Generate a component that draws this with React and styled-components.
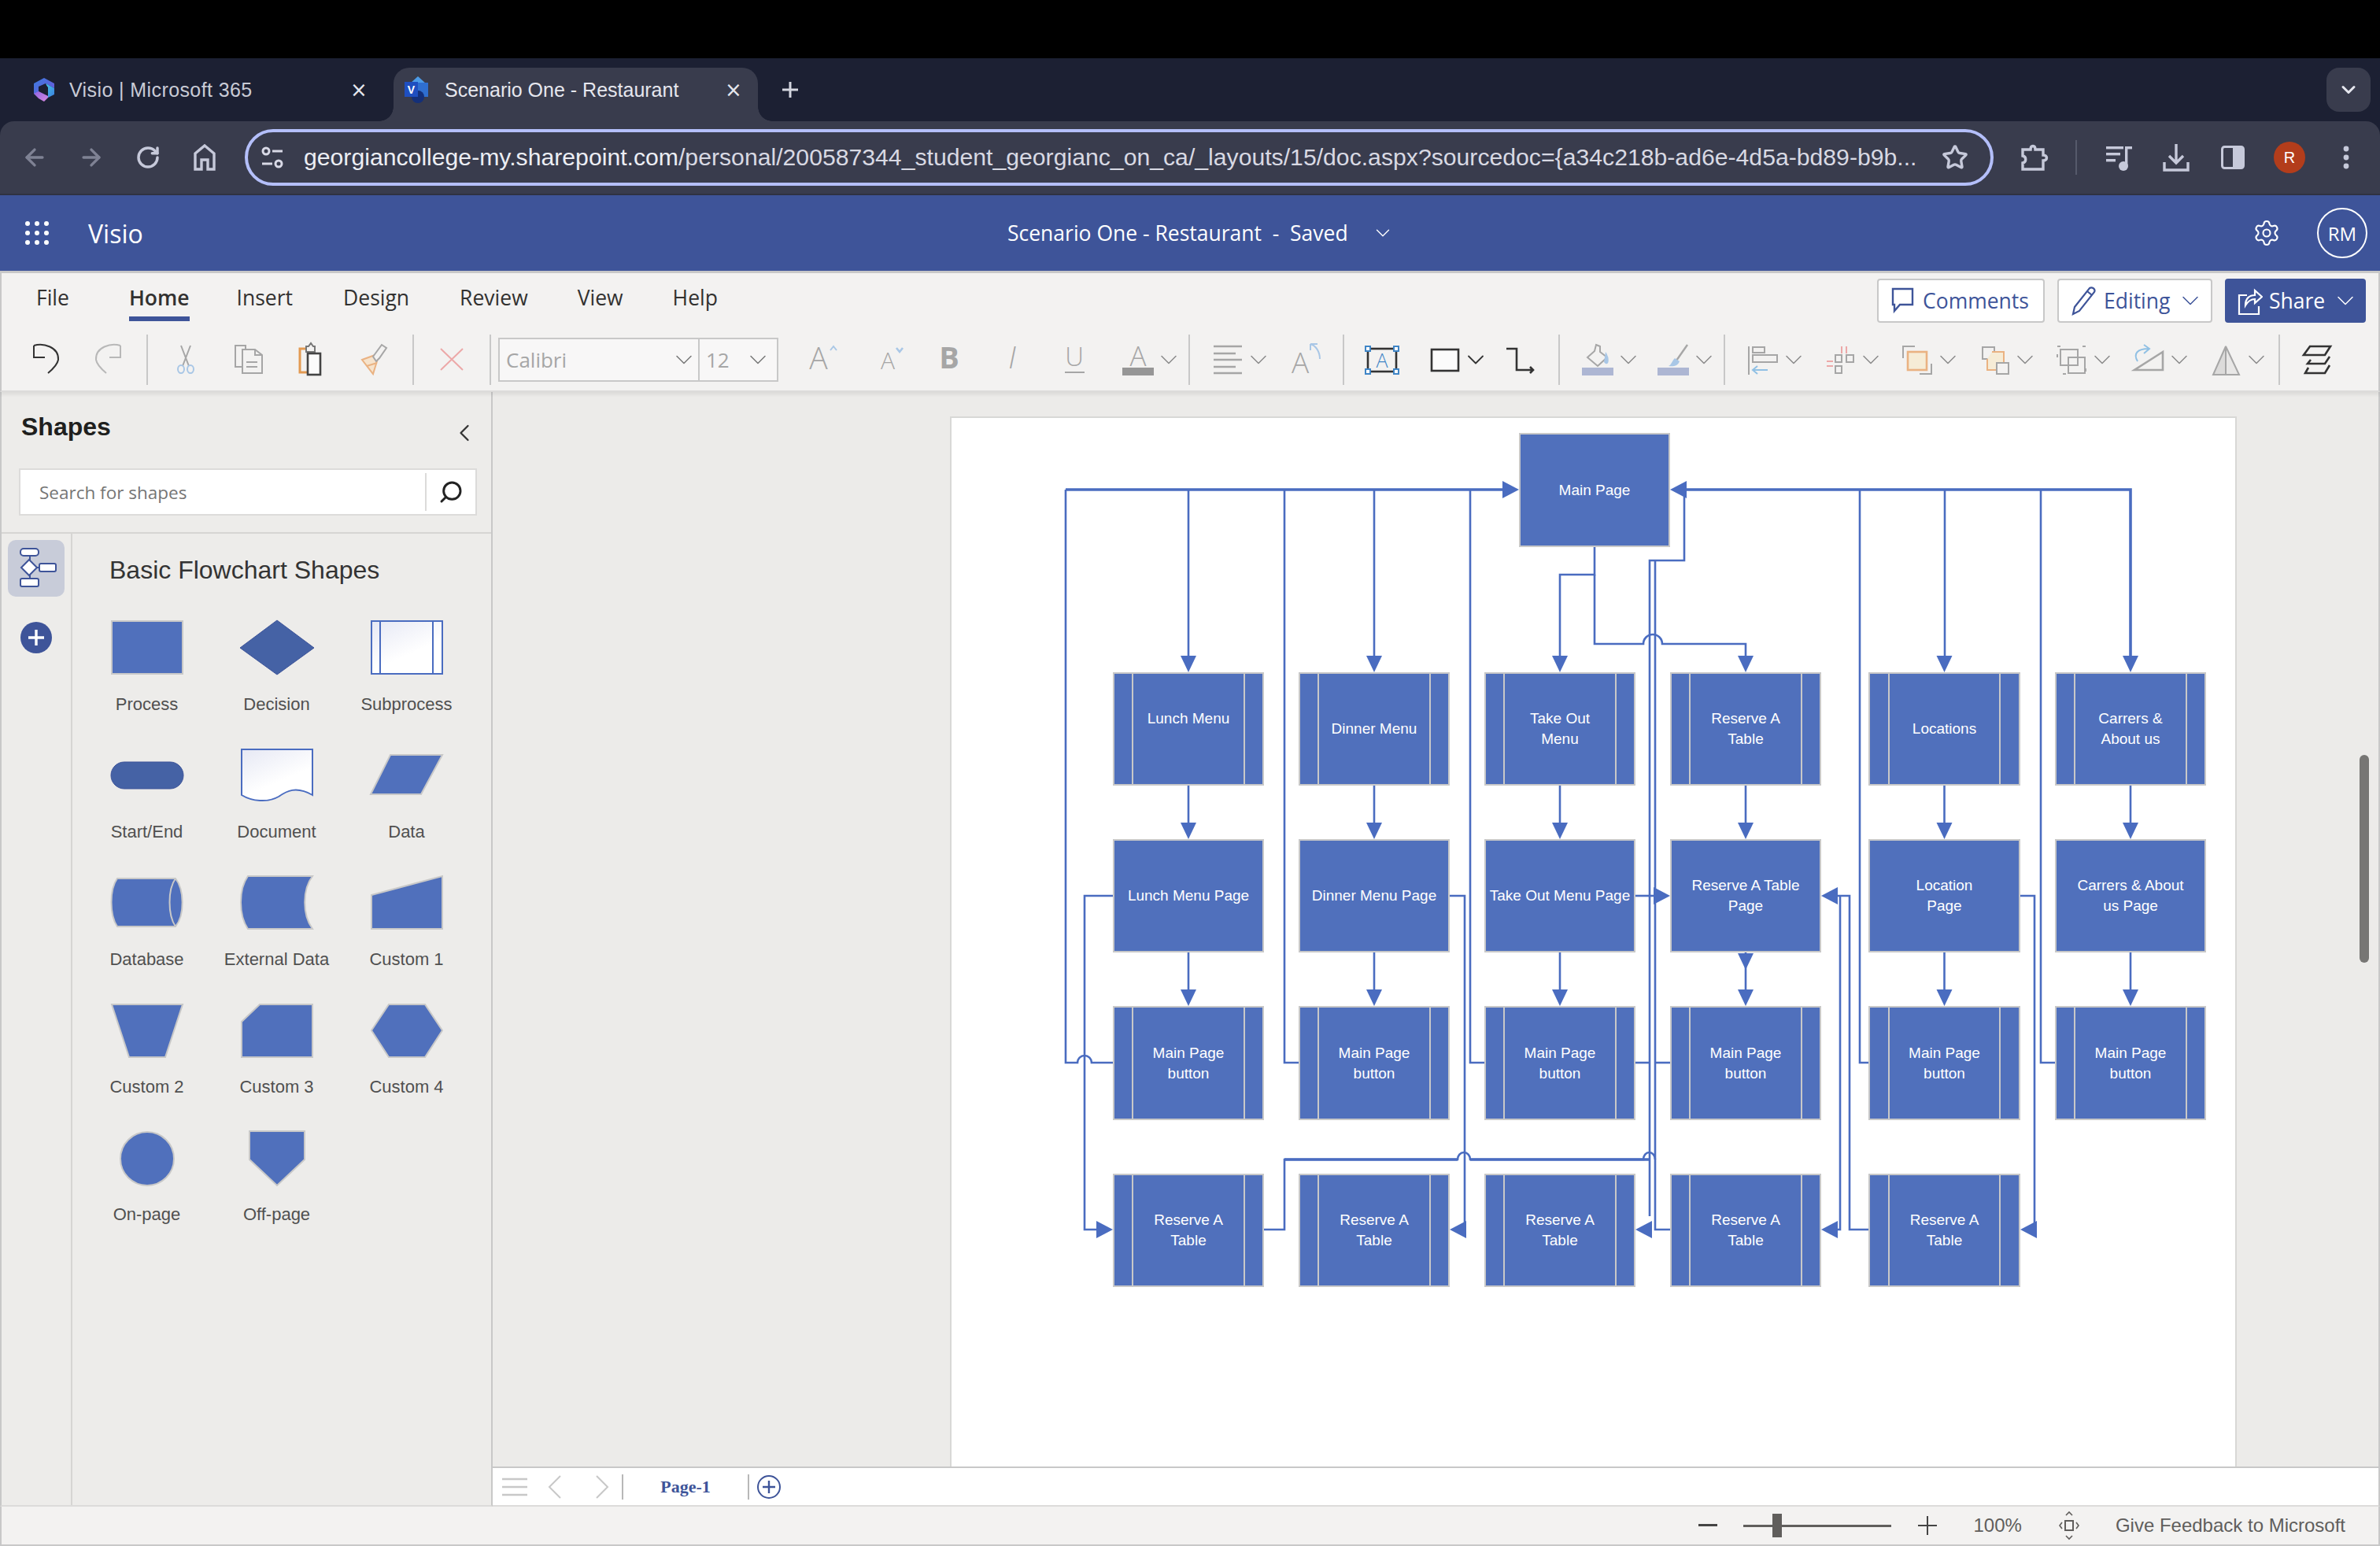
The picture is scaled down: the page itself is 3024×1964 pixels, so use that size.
import React from "react";
import styled, { createGlobalStyle } from "styled-components";
import { ChevronDown, ChevronLeft, ArrowLeft, ArrowRight, RotateCw, Star, Settings, Search } from "lucide-react";

const BLUE = "#3e5499";
const NODE_BLUE = "#5070bc";
const LINE_BLUE = "#4a6cc0";
const STRIP = "#1c2033";
const BAR = "#393c4d";
const SHEET_X = 1209;
const SHEET_Y = 531;

const GlobalStyle = createGlobalStyle`
  html, body { margin: 0; padding: 0; background: #000; }
  * { box-sizing: border-box; }
`;

const Page = styled.div`
  width: 3024px;
  height: 1964px;
  display: flex;
  flex-direction: column;
  overflow: hidden;
  background: #000;
  font-family: "Liberation Sans", Arial, sans-serif;
`;

/*---------------- browser chrome ----------------*/
const TopBlack = styled.div`
  height: 74px;
  background: #000;
`;

const TabStrip = styled.div`
  height: 80px;
  background: ${STRIP};
  display: flex;
  align-items: flex-end;
  padding-left: 12px;
  padding-right: 12px;
`;

const BrowserTab = styled.div`
  width: ${(p) => p.$w}px;
  height: 68px;
  display: flex;
  align-items: center;
  padding-bottom: 12px;
  padding-left: ${(p) => p.$pl}px;
  border-radius: 20px 20px 0 0;
  color: ${(p) => (p.$active ? "#e6e7ee" : "#c9cbd6")};
  background: ${(p) => (p.$active ? BAR : "transparent")};
  font-size: 25px;
  letter-spacing: ${(p) => p.$ls || 0}px;
  position: relative;
  flex-shrink: 0;
  ${(p) =>
    p.$active &&
    `&::before, &::after { content: ""; position: absolute; bottom: 0; width: 18px; height: 18px; }
     &::before { left: -18px; background: radial-gradient(circle at 0 0, ${STRIP} 17.5px, ${BAR} 18px); }
     &::after { right: -18px; background: radial-gradient(circle at 100% 0, ${STRIP} 17.5px, ${BAR} 18px); }`}
`;

const TabTitle = styled.span`
  margin-left: 17px;
  flex: 1;
  white-space: nowrap;
`;

const TabClose = styled.span`
  width: 24px;
  color: #e6e7ee;
  font-size: 26px;
  font-family: "DejaVu Sans", sans-serif;
  text-align: center;
  margin-right: ${(p) => p.$mr}px;
`;

const NewTab = styled.div`
  width: 56px;
  height: 68px;
  padding-bottom: 12px;
  margin-left: 13px;
  display: flex;
  align-items: center;
  justify-content: center;
  color: #d4d6e0;
`;

const TabMenu = styled.div`
  margin-left: auto;
  margin-bottom: 12px;
  width: 56px;
  height: 56px;
  border-radius: 16px;
  background: ${BAR};
  display: flex;
  align-items: center;
  justify-content: center;
  color: #e6e7ee;
`;

const ChromeBack = styled.div`
  background: ${STRIP};
`;

const ChromeBar = styled.div`
  height: 94px;
  background: ${BAR};
  border-bottom: 2px solid #2f3241;
  border-radius: 18px 18px 0 0;
  display: flex;
  align-items: center;
`;

const NavIcon = styled.div`
  width: ${(p) => p.$w || 72}px;
  height: 60px;
  display: flex;
  align-items: center;
  justify-content: center;
  color: ${(p) => p.$color || "#c6c9da"};
  flex-shrink: 0;
`;

const UrlBar = styled.div`
  width: 2222px;
  height: 72px;
  margin-left: 23px;
  border: 4px solid #b4bffa;
  border-radius: 36px;
  display: flex;
  align-items: center;
  padding-left: 17px;
  padding-right: 9px;
  flex-shrink: 0;
`;

const UrlText = styled.div`
  margin-left: 26px;
  flex: 1;
  font-size: 30.2px;
  color: #d8d9e3;
  white-space: nowrap;
  b { font-weight: 400; color: #eceef4; }
`;

const ChromeDivider = styled.div`
  width: 2px;
  height: 44px;
  margin-right: 18px;
  background: #565a6b;
  flex-shrink: 0;
`;

const Avatar = styled.div`
  width: 40px;
  height: 40px;
  border-radius: 50%;
  background: #b33d1b;
  color: #fff;
  font-size: 20px;
  display: flex;
  align-items: center;
  justify-content: center;
`;

/*---------------- office header ----------------*/
const AppHeader = styled.div`
  height: 96px;
  background: ${BLUE};
  color: #fff;
  font-family: "Open Sans", sans-serif;
  display: grid;
  grid-template-columns: 1280px 1fr auto;
  align-items: center;
`;

const HeaderLeft = styled.div`
  display: flex;
  align-items: center;
  padding-left: 32px;
`;

const Waffle = styled.div`
  display: grid;
  grid-template-columns: repeat(3, 6px);
  gap: 6px;
  span { width: 6px; height: 6px; border-radius: 50%; background: #fff; }
`;

const AppName = styled.div`
  font-size: 32px;
  margin-left: 50px;
`;

const DocTitle = styled.div`
  display: flex;
  align-items: center;
  font-size: 26.5px;
  white-space: pre;
  svg { margin-left: 29px; }
`;

const HeaderRight = styled.div`
  display: flex;
  align-items: center;
  padding-right: 16px;
`;

const UserBadge = styled.div`
  width: 64px;
  height: 64px;
  margin-left: 46px;
  border-radius: 50%;
  border: 2px solid #fff;
  font-size: 24px;
  display: flex;
  align-items: center;
  justify-content: center;
`;

/*---------------- ribbon ----------------*/
const Ribbon = styled.div`
  height: 154px;
  background: #f3f2f1;
  border: 2px solid #c8c8c8;
  border-width: 3px 2px 2px 2px;
  border-bottom-color: #dcdbda;
  font-family: "Open Sans", sans-serif;
  box-shadow: 0 3px 5px rgba(0, 0, 0, 0.08);
  position: relative;
  z-index: 2;
`;

const RibbonTabs = styled.div`
  height: 76px;
  display: flex;
  align-items: flex-start;
  padding: 7px 16px 0 44px;
`;

const RibbonTab = styled.div`
  height: 54px;
  margin-right: ${(p) => p.$mr}px;
  font-size: 26.5px;
  line-height: 48px;
  color: #323130;
  font-weight: ${(p) => (p.$active ? 600 : 400)};
  border-bottom: 6px solid ${(p) => (p.$active ? BLUE : "transparent")};
`;

const ActionButton = styled.div`
  height: 56px;
  width: ${(p) => p.$w}px;
  margin-left: ${(p) => (p.$first ? "auto" : "16px")};
  padding-left: ${(p) => p.$pl}px;
  border: 2px solid ${(p) => (p.$primary ? BLUE : "#c8c8c8")};
  border-radius: 4px;
  background: ${(p) => (p.$primary ? BLUE : "#fff")};
  color: ${(p) => (p.$primary ? "#fff" : BLUE)};
  font-size: 26.5px;
  font-weight: 500;
  display: flex;
  align-items: center;
  gap: 8px;
  svg { flex-shrink: 0; }
`;

const ToolRow = styled.div`
  height: 68px;
  display: flex;
  align-items: center;
  padding-left: 14px;
`;

const RibbonSep = styled.div`
  width: 2px;
  height: 64px;
  background: #c8c8c8;
  margin-left: ${(p) => p.$ml || 0}px;
  margin-right: ${(p) => p.$mr || 0}px;
  flex-shrink: 0;
`;

const Tool = styled.div`
  width: ${(p) => p.$w}px;
  margin-left: ${(p) => p.$ml || 0}px;
  height: 56px;
  display: flex;
  align-items: center;
  justify-content: center;
  flex-shrink: 0;
`;

const ChevBox = styled.div`
  width: 24px;
  height: 56px;
  display: flex;
  align-items: center;
  justify-content: center;
  color: #8a8a8a;
  flex-shrink: 0;
  svg { flex-shrink: 0; }
`;

const ToolGroup = styled.div`
  display: flex;
  align-items: center;
  gap: ${(p) => p.$gap || 0}px;
  margin-left: ${(p) => p.$ml || 0}px;
`;

const DropTool = styled.div`
  display: flex;
  align-items: center;
  margin-left: ${(p) => p.$ml || 0}px;
`;

const FontCombo = styled.div`
  width: 356px;
  height: 56px;
  border: 2px solid #c8c8c8;
  background: #f8f7f7;
  display: flex;
  color: #a6a6a6;
  font-size: 26px;
  font-family: "Open Sans", sans-serif;
  flex-shrink: 0;
`;

const ComboField = styled.div`
  width: ${(p) => p.$w}px;
  display: flex;
  align-items: center;
  justify-content: space-between;
  padding: 0 0 0 8px;
  border-right: ${(p) => (p.$divided ? "2px solid #c8c8c8" : "none")};
`;

/*---------------- main ----------------*/
const Main = styled.div`
  flex: 1;
  display: flex;
  min-height: 0;
`;

const ShapesPanel = styled.div`
  width: 626px;
  background: #edecea;
  border-left: 2px solid #c8c8c8;
  border-right: 2px solid #c8c8c8;
  border-bottom: 2px solid #dcdbda;
  display: flex;
  flex-direction: column;
  flex-shrink: 0;
`;

const PanelHead = styled.div`
  height: 180px;
  border-bottom: 2px solid #d6d5d3;
  padding: 26px 16px 0 22px;
`;

const PanelTitleRow = styled.div`
  display: flex;
  justify-content: space-between;
  align-items: center;
  height: 36px;
  padding-left: 3px;
  color: #201f1e;
  font-size: 32px;
  font-weight: 700;
  svg { margin-top: 16px; margin-right: 0; color: #333; }
`;

const SearchBox = styled.div`
  margin-top: 35px;
  width: 582px;
  height: 60px;
  background: #fff;
  border: 2px solid #dcdbda;
  display: flex;
  align-items: center;
  font-family: "Open Sans", sans-serif;
  font-size: 22.5px;
  color: #757575;
  padding-left: 24px;
`;

const SearchDivider = styled.div`
  width: 2px;
  height: 48px;
  margin-left: auto;
  background: #dcdbda;
`;

const SearchIconBox = styled.div`
  width: 62px;
  display: flex;
  justify-content: center;
  color: #222;
`;

const PanelBody = styled.div`
  flex: 1;
  display: flex;
  min-height: 0;
`;

const StencilRail = styled.div`
  width: 90px;
  border-right: 2px solid #d6d5d3;
  display: flex;
  flex-direction: column;
  align-items: center;
  padding-top: 8px;
  flex-shrink: 0;
`;

const RailTile = styled.div`
  width: 72px;
  height: 72px;
  border-radius: 10px;
  background: #c8ccd9;
  display: flex;
  align-items: center;
  justify-content: center;
`;

const RailAdd = styled.div`
  width: 40px;
  height: 40px;
  margin-top: 32px;
  border-radius: 50%;
  background: ${BLUE};
  display: flex;
  align-items: center;
  justify-content: center;
`;

const Stencil = styled.div`
  flex: 1;
  padding-top: 28px;
  padding-left: 12px;
`;

const StencilTitle = styled.div`
  font-size: 32px;
  color: #333;
  line-height: 36px;
  padding-left: 35px;
`;

const ShapeGrid = styled.div`
  margin-top: 46px;
  display: grid;
  grid-template-columns: repeat(3, 165px);
  grid-auto-rows: 162px;
`;

const ShapeCell = styled.div`
  display: flex;
  flex-direction: column;
  align-items: center;
`;

const ShapeLabel = styled.div`
  margin-top: 23px;
  font-size: 22px;
  line-height: 24px;
  color: #505050;
  white-space: nowrap;
`;

const Workspace = styled.div`
  flex: 1;
  min-width: 0;
  display: flex;
  flex-direction: column;
`;

const Canvas = styled.div`
  flex: 1;
  min-height: 0;
  background: #ecebe9;
  border-right: 2px solid #c8c8c8;
  overflow: hidden;
  position: relative;
  padding-top: 33px;
  padding-left: 583px;
`;

const Sheet = styled.div`
  width: 1631px;
  height: 1500px;
  background: #fff;
  box-shadow: 0 0 0 2px #d8d8d6;
  position: relative;
`;

const Connectors = styled.svg`
  position: absolute;
  left: 0;
  top: 0;
`;

const FlowNode = styled.div`
  position: absolute;
  left: ${(p) => p.$x - SHEET_X}px;
  top: ${(p) => p.$y - SHEET_Y}px;
  width: ${(p) => p.$w}px;
  height: ${(p) => p.$h}px;
  background: ${NODE_BLUE};
  border: 2px solid #c8c8c8;
  color: #fff;
  font-size: 19px;
  line-height: 26px;
  text-align: center;
  white-space: nowrap;
  display: flex;
  align-items: center;
  justify-content: center;
  ${(p) =>
    p.$sub &&
    `&::before, &::after { content: ""; position: absolute; top: 0; bottom: 0; width: 2px; background: #c8c8c8; }
     &::before { left: ${p.$w > 192 ? 23 : 22}px; }
     &::after { right: ${p.$w > 192 ? 23 : 22}px; }`}
`;

const ScrollThumb = styled.div`
  position: absolute;
  left: 2372px;
  top: 461px;
  width: 12px;
  height: 264px;
  border-radius: 6px;
  background: #777674;
`;

const PageBar = styled.div`
  height: 51px;
  background: #fff;
  border-top: 2px solid #c8c8c8;
  border-bottom: 2px solid #dcdbda;
  border-right: 2px solid #c8c8c8;
  display: flex;
  align-items: center;
  padding-left: 12px;
  flex-shrink: 0;
`;

const PageName = styled.div`
  font-family: "Liberation Serif", serif;
  font-weight: 700;
  font-size: 22px;
  color: ${BLUE};
  width: 158px;
  text-align: center;
`;

const PageSep = styled.div`
  width: 2px;
  height: 32px;
  background: #b8b8b8;
`;

const StatusBar = styled.div`
  height: 50px;
  background: #f3f2f1;
  border: 2px solid #c8c8c8;
  border-width: 0 2px 2px 2px;
  display: flex;
  align-items: center;
  justify-content: flex-end;
  color: #605e5c;
  font-size: 24px;
  padding-right: 42px;
  flex-shrink: 0;
`;

const ZoomTrack = styled.div`
  width: 188px;
  height: 3px;
  background: #605e5c;
  margin-left: 33px;
  margin-right: 34px;
  position: relative;
`;

const ZoomThumb = styled.div`
  position: absolute;
  left: 37px;
  top: -14px;
  width: 12px;
  height: 30px;
  background: #605e5c;
`;

const StatusText = styled.span`
  margin-left: ${(p) => p.$ml}px;
  white-space: nowrap;
`;

/*---------------- chrome icons ----------------*/
const M365Icon = () => (
  <svg width="30" height="32" viewBox="0 0 30 32">
    <defs>
      <linearGradient id="mA" x1="0" y1="0" x2="1" y2="1"><stop offset="0" stopColor="#3b7de0" /><stop offset="1" stopColor="#6f52d8" /></linearGradient>
      <linearGradient id="mB" x1="0" y1="0" x2="1" y2="1"><stop offset="0" stopColor="#46c7e6" /><stop offset="1" stopColor="#3b7de0" /></linearGradient>
      <linearGradient id="mC" x1="0" y1="0" x2="1" y2="1"><stop offset="0" stopColor="#8e62e0" /><stop offset="1" stopColor="#d88ae0" /></linearGradient>
    </defs>
    <path d="M15 1 L28 8 V14 L17 8 L8 12 V24 L2 21 V8 Z" fill="url(#mA)" />
    <path d="M17 8 L28 14 V22 L20 26 V14 Z" fill="url(#mB)" />
    <path d="M2 21 L8 18 L20 24 V26 L15 31 L8 27 Z" fill="url(#mC)" />
    <path d="M10 12 L16 9 L20 13 V22 L10 18 Z" fill={STRIP} />
  </svg>
);

const VisioTabIcon = () => (
  <svg width="34" height="34" viewBox="0 0 34 34">
    <path d="M17 0 L27 9 H7 Z" fill="#4c9be8" />
    <rect x="9" y="8" width="21" height="18" fill="#2f6fd0" />
    <circle cx="17" cy="26" r="8" fill="#14307a" />
    <rect x="0" y="7" width="17" height="19" fill="#1f4fc0" />
    <text x="8.5" y="22" fontSize="14" fontWeight="700" fill="#fff" textAnchor="middle" fontFamily="Liberation Sans">V</text>
  </svg>
);

const TuneIcon = () => (
  <svg width="28" height="28" viewBox="0 0 28 28" fill="none" stroke="#d8d9e6" strokeWidth="3">
    <circle cx="6" cy="6" r="4" />
    <path d="M14 6 H27" />
    <path d="M1 22 H14" />
    <circle cx="22" cy="22" r="4" />
  </svg>
);

const HomeIcon = () => (
  <svg width="30" height="34" viewBox="0 0 30 34" fill="none" stroke="#c6c9da" strokeWidth="3.4">
    <path d="M3 32 V12 L15 2 L27 12 V32 H19 V20 H11 V32 Z" />
  </svg>
);

const ExtensionIcon = () => (
  <svg width="36" height="36" viewBox="0 0 36 36" fill="none" stroke="#c6c9da" strokeWidth="3.4">
    <path d="M3 8 H13 C13 2 19 2 19 8 H29 V15 C35 15 35 22 29 22 V33 H3 V25 C8 24 8 17 3 16 Z" />
  </svg>
);

const MediaIcon = () => (
  <svg width="36" height="36" viewBox="0 0 36 36" fill="#c6c9da">
    <rect x="1" y="4" width="22" height="3.4" />
    <rect x="1" y="12" width="18" height="3.4" />
    <rect x="1" y="20" width="12" height="3.4" />
    <rect x="25" y="4" width="9" height="3.4" />
    <rect x="25" y="4" width="3.4" height="24" />
    <circle cx="23" cy="29" r="6" />
  </svg>
);

const DownloadIcon = () => (
  <svg width="34" height="36" viewBox="0 0 34 36" fill="none" stroke="#c6c9da" strokeWidth="3.4">
    <path d="M17 1 V24 M8 16 L17 25 L26 16" />
    <path d="M2 24 V34 H32 V24" />
  </svg>
);

const SidePanelIcon = () => (
  <svg width="30" height="30" viewBox="0 0 30 30">
    <rect x="1.5" y="1.5" width="27" height="27" rx="3" fill="none" stroke="#c6c9da" strokeWidth="3" />
    <rect x="15" y="2" width="13" height="26" fill="#c6c9da" />
  </svg>
);

const Kebab = () => (
  <svg width="10" height="30" viewBox="0 0 10 30" fill="#c6c9da">
    <circle cx="5" cy="4" r="3.4" />
    <circle cx="5" cy="15" r="3.4" />
    <circle cx="5" cy="26" r="3.4" />
  </svg>
);

/*---------------- ribbon icons ----------------*/
const Ico = ({ w = 48, h = 56, children }) => (
  <svg width={w} height={h} viewBox={`0 0 ${w} ${h}`} fill="none" strokeWidth="2" style={{ overflow: "visible" }}>
    {children}
  </svg>
);

const letter = { fontFamily: "Open Sans, sans-serif", fontWeight: 300 };
const GREY = "#a6a6a6";
const PALE_BLUE = "#a9c7e6";
const SKY = "#90c0e4";
const PEACH = "#eab282";
const CREAM = "#f6ecd6";

const UndoIcon = () => (
  <Ico>
    <path d="M10 10 V25 H24" stroke="#333" />
    <path d="M10 10 C 22 6 42 12 41 28 C 40 34 34 40 28 45" stroke="#333" />
  </Ico>
);

const RedoIcon = () => (
  <Ico>
    <path d="M38 10 V25 H24" stroke="#b8b8b8" />
    <path d="M38 10 C 26 6 6 12 7 28 C 8 34 14 40 20 45" stroke="#b8b8b8" />
  </Ico>
);

const CutIcon = () => (
  <Ico>
    <path d="M18 10 L28 36 M30 10 L20 36" stroke={GREY} />
    <ellipse cx="18" cy="40" rx="4" ry="5" stroke={PALE_BLUE} />
    <ellipse cx="30" cy="40" rx="4" ry="5" stroke={PALE_BLUE} />
  </Ico>
);

const CopyIcon = () => (
  <Ico>
    <path d="M16 37 H7 V10 H20 V15" stroke={GREY} />
    <path d="M16 15 H32 L41 22 V45 H16 Z M32 15 V22 H41 M21 31 H35 M21 37 H35" stroke={GREY} />
  </Ico>
);

const PasteIcon = () => (
  <Ico>
    <path d="M17 14 H9 V44 H19" stroke="#e39a52" strokeWidth="3" />
    <path d="M17 18 V11 H20 L23 7 L26 11 H28 V18 Z" stroke="#777" />
    <rect x="19" y="20" width="16" height="27" fill="#fbfbfb" stroke="#444" strokeWidth="2.6" />
  </Ico>
);

const PainterIcon = () => (
  <Ico>
    <path d="M8 28 L30 20 L22 46 Z" fill="#f6e3cc" stroke={PEACH} />
    <path d="M22 24 L33 9 L39 13 L30 26 L26 30 Z" fill="#f3f2f1" stroke={GREY} />
    <path d="M14 36 L27 32" stroke={PEACH} />
  </Ico>
);

const DeleteIcon = () => (
  <Ico>
    <path d="M10 14 L38 41 M38 14 L10 41" stroke="#eca8a8" />
  </Ico>
);

const GrowIcon = () => (
  <Ico>
    <text x="22" y="40" fontSize="39" fill={GREY} textAnchor="middle" style={letter}>A</text>
    <path d="M37 16 L41 11 L45 16" stroke={PALE_BLUE} />
  </Ico>
);

const ShrinkIcon = () => (
  <Ico>
    <text x="24" y="40" fontSize="30" fill={GREY} textAnchor="middle" style={letter}>A</text>
    <path d="M35 13 L39 18 L43 13" stroke={PALE_BLUE} strokeWidth="2.6" />
  </Ico>
);

const BoldIcon = () => (
  <Ico>
    <text x="24" y="39" fontSize="38" fontWeight="700" fill={GREY} textAnchor="middle" fontFamily="Open Sans, sans-serif">B</text>
  </Ico>
);

const ItalicIcon = () => (
  <Ico>
    <text x="24" y="39" fontSize="38" fontStyle="italic" fill={GREY} textAnchor="middle" style={letter}>I</text>
  </Ico>
);

const UnderlineIcon = () => (
  <Ico>
    <text x="24" y="36" fontSize="33" fill={GREY} textAnchor="middle" style={letter}>U</text>
    <path d="M12 44 H37" stroke={GREY} />
  </Ico>
);

const FontColorIcon = () => (
  <Ico>
    <text x="24" y="36" fontSize="35" fill={GREY} textAnchor="middle" style={letter}>A</text>
    <rect x="4" y="38" width="40" height="10" fill="#969696" />
  </Ico>
);

const AlignIcon = () => (
  <Ico>
    <path d="M6 11 H42 M6 20 H34 M6 28 H42 M6 37 H34 M6 45 H42" stroke={GREY} strokeWidth="2.4" />
  </Ico>
);

const RotateTextIcon = () => (
  <Ico>
    <text x="24" y="45" fontSize="37" fill={GREY} textAnchor="middle" style={letter}>A</text>
    <path d="M49 27 C 49 18 44 10 37 8 M37 8 H46 M37 8 V16" stroke={PALE_BLUE} />
  </Ico>
);

const TextBoxIcon = () => (
  <Ico>
    <rect x="6" y="14" width="36" height="29" stroke="#333" strokeWidth="2.6" />
    <text x="24" y="38" fontSize="25" fill="#3f85c6" textAnchor="middle" style={letter}>A</text>
    {[[6, 14], [42, 14], [6, 43], [42, 43]].map(([x, y]) => (
      <rect key={`${x}${y}`} x={x - 3} y={y - 3} width="6" height="6" fill="#fff" stroke="#3f85c6" />
    ))}
  </Ico>
);

const RectIcon = () => (
  <Ico>
    <rect x="7" y="15" width="34" height="27" fill="#fbfbfb" stroke="#333" strokeWidth="2.6" />
  </Ico>
);

const ConnectorIcon = () => (
  <Ico>
    <path d="M6 14 H19 V41 H40 M36 37 L40 41 L36 45" stroke="#333" strokeWidth="2.6" />
  </Ico>
);

const FillIcon = () => (
  <Ico>
    <path d="M22 9 L27 11 V18 L36 25 L24 36 L11 25 L20 17 Z" stroke={GREY} />
    <path d="M34 18 C 41 28 37 38 32 31 Z" fill={PALE_BLUE} />
    <rect x="4" y="38" width="40" height="10" fill="#adb6d3" />
  </Ico>
);

const LineColorIcon = () => (
  <Ico>
    <path d="M42 9 L28 29" stroke={GREY} strokeWidth="2.4" />
    <path d="M26 26 L32 30 C 30 36 24 37 18 36 C 22 34 22 30 26 26 Z" fill={PALE_BLUE} />
    <rect x="4" y="38" width="40" height="10" fill="#adb6d3" />
  </Ico>
);

const AlignShapesIcon = () => (
  <Ico>
    <path d="M6 11 V47" stroke={GREY} />
    <rect x="11" y="12" width="15" height="7" stroke={GREY} />
    <rect x="11" y="22" width="31" height="9" stroke={GREY} />
    <path d="M30 41 H11 M17 36 L11 41 L17 46" stroke={SKY} />
  </Ico>
);

const PositionIcon = () => (
  <Ico>
    <path d="M26 11 V20 M32 11 V20 M7 30 H15 M7 36 H15" stroke="#eca8a8" />
    <rect x="18" y="22" width="8" height="9" stroke={GREY} />
    <rect x="32" y="22" width="9" height="9" stroke={GREY} />
    <rect x="18" y="36" width="8" height="9" stroke={GREY} />
  </Ico>
);

const ForwardIcon = () => (
  <Ico>
    <path d="M6 26 V11 H21" stroke={GREY} />
    <rect x="12" y="18" width="24" height="23" fill={CREAM} stroke={PEACH} strokeWidth="2.6" />
    <path d="M42 33 V46 H27" stroke={GREY} />
  </Ico>
);

const BackwardIcon = () => (
  <Ico>
    <rect x="9" y="12" width="15" height="15" stroke={GREY} />
    <path d="M21 18 H36 V41 H15 V27" fill={CREAM} stroke={PEACH} />
    <rect x="27" y="32" width="15" height="14" fill="#f3f2f1" stroke={GREY} />
  </Ico>
);

const GroupIcon = () => (
  <Ico>
    <rect x="6" y="11" width="36" height="35" stroke={GREY} strokeDasharray="4 28" />
    <rect x="10" y="15" width="22" height="20" stroke={GREY} />
    <rect x="20" y="25" width="21" height="20" stroke={GREY} />
  </Ico>
);

const RotateIcon = () => (
  <Ico>
    <path d="M6 41 H42 V18 Z" stroke={GREY} strokeWidth="2.6" />
    <path d="M10 30 C 4 20 10 14 24 14 M18 9 L25 14 L18 20" stroke={SKY} />
  </Ico>
);

const FlipIcon = () => (
  <Ico>
    <path d="M24 11 L8 47 H24 Z" fill="#dcdbda" stroke={GREY} />
    <path d="M24 11 L41 47 H24 Z" fill="#e8e7e6" stroke={GREY} />
  </Ico>
);

const LayersIcon = () => (
  <Ico>
    <path d="M15 11 H41 L34 22 H7 Z" stroke="#333" strokeWidth="2.6" />
    <path d="M40 24 L34 33 H12 L16 28" stroke="#333" strokeWidth="2.6" />
    <path d="M40 35 L34 45 H9 L13 38" stroke="#333" strokeWidth="2.6" />
  </Ico>
);

const Chev = () => <ChevronDown size={36} strokeWidth={1} />;

const PagerChevron = ({ flip }) => (
  <svg width="18" height="30" viewBox="0 0 18 30" fill="none" stroke="#c8c8c8" strokeWidth="2">
    <path d={flip ? "M2 1 L16 15 L2 29" : "M16 1 L2 15 L16 29"} />
  </svg>
);

const dropTools = [AlignShapesIcon, PositionIcon, ForwardIcon, BackwardIcon, GroupIcon, RotateIcon, FlipIcon];

/*---------------- stencil shapes ----------------*/
const SHAPE_EDGE = "#c8c8c8";

const shapeBox = (children) => (
  <svg width="96" height="72" viewBox="0 0 96 72" style={{ overflow: "visible" }}>
    <defs>
      <linearGradient id="paper" x1="0" y1="0" x2="0.6" y2="1"><stop offset="0" stopColor="#e6e8f4" /><stop offset="0.7" stopColor="#fff" /></linearGradient>
    </defs>
    {children}
  </svg>
);

const base = { fill: NODE_BLUE, stroke: SHAPE_EDGE, strokeWidth: 2 };
const dark = { fill: "#4562a5", stroke: "#3e5499", strokeWidth: 1 };
const paper = { fill: "url(#paper)", stroke: LINE_BLUE, strokeWidth: 2 };

const shapes = [
  ["Process", <rect x="3" y="1" width="90" height="67" {...base} />],
  ["Decision", <path d="M48 0 L95 35 L48 69 L1 35 Z" {...dark} />],
  ["Subprocess", <><rect x="3" y="1" width="90" height="67" {...paper} /><path d="M14 1 V68 M81 1 V68" stroke={LINE_BLUE} strokeWidth="2" /></>],
  ["Start/End", <rect x="2" y="18" width="92" height="34" rx="17" {...dark} />],
  ["Document", <path d="M3 2 H93 V60 C 72 48 60 55 50 62 C 36 70 16 68 3 60 Z" {...paper} />],
  ["Data", <path d="M27 9 H93 L66 59 H2 Z" {...base} />],
  ["Database", <><path d="M10 4 H84 C 95 18 96 50 84 65 H10 C 0 50 0 18 10 4 Z" {...base} /><path d="M84 4 C 74 18 74 50 84 65" fill="none" stroke={SHAPE_EDGE} strokeWidth="2" /></>],
  ["External Data", <path d="M11 1 H93 C 80 18 80 50 93 68 H11 C -1 50 -1 18 11 1 Z" {...base} />],
  ["Custom 1", <path d="M3 25 L93 1 V68 H3 Z" {...base} />],
  ["Custom 2", <path d="M3 2 H93 L71 69 H25 Z" {...base} />],
  ["Custom 3", <path d="M3 24 L26 2 H93 V69 H3 Z" {...base} />],
  ["Custom 4", <path d="M3 35 L25 2 H71 L93 35 L71 69 H25 Z" {...base} />],
  ["On-page", <circle cx="48" cy="36" r="34" {...base} />],
  ["Off-page", <path d="M13 1 H83 V37 L48 70 L13 37 Z" {...base} />],
];

/*---------------- diagram data ----------------*/
const colX = [1414, 1650, 1886, 2122, 2374, 2611];
const colW = [192, 192, 192, 192, 193, 192];
const rowY = [854, 1066, 1278, 1491];
const rowH = [144, 144, 145, 144];

const grid = [
  [["Lunch Menu", ""], ["Dinner Menu"], ["Take Out", "Menu"], ["Reserve A", "Table"], ["Locations"], ["Carrers &", "About us"]],
  [["Lunch Menu Page"], ["Dinner Menu Page"], ["Take Out Menu Page"], ["Reserve A Table", "Page"], ["Location", "Page"], ["Carrers & About", "us Page"]],
  [["Main Page", "button"], ["Main Page", "button"], ["Main Page", "button"], ["Main Page", "button"], ["Main Page", "button"], ["Main Page", "button"]],
  [["Reserve A", "Table"], ["Reserve A", "Table"], ["Reserve A", "Table"], ["Reserve A", "Table"], ["Reserve A", "Table"], null],
];

const heavyLines = [
  "M1354 622 H1912",
  "M2140 622 H2707 V835",
  "M2096 1473 H1868",
  "M1852 1473 H1632",
];

const lines = [
  // main page feedback loops on the left
  "M1414 1350 H1387 A9 9 0 0 0 1369 1350 H1354 V622",
  "M1650 1350 H1632 V622",
  "M1886 1350 H1868 V622",
  "M1510 622 V835",
  "M1746 622 V835",
  // out of main page
  "M2026 695 V730 H1982 V835",
  "M2026 730 V818 H2088 A12 12 0 0 1 2112 818 H2218 V835",
  // right side loops
  "M2363 622 V1350 H2374",
  "M2471 622 V835",
  "M2593 622 V1350 H2611",
  "M2140 622 V712 H2096 V1545",
  "M2103 712 V1562 H2122",
  "M2078 1350 H2096",
  "M2103 1350 H2122",
  "M2078 1138 H2101",
  // first to last row cross overs
  "M1414 1138 H1378 V1562 H1396",
  "M1842 1138 H1861 V1562 H1860",
  "M1606 1562 H1632 V1473 H1852 A8 9 0 0 1 1868 1473 H2088 A7.5 9 0 0 1 2103 1473",
  "M2335 1138 H2350 V1562 H2374",
  "M2338 1138 V1562 H2334",
  "M2567 1138 H2585 V1562 H2586",
];

// [tip x, tip y, direction]
const arrowHeads = [
  [1930, 622, "r"], [2122, 622, "l"],
  [2078, 1562, "l"], [2122, 1138, "r"], [2314, 1138, "l"], [2314, 1562, "l"],
  [2567, 1562, "l"], [1842, 1562, "l"], [1414, 1562, "r"],
  [2218, 1232, "d"],
];
colX.forEach((x, i) => {
  const cx = x + colW[i] / 2;
  arrowHeads.push([cx, 854, "d"], [cx, 1066, "d"], [cx, 1278, "d"]);
});

const arrowPath = ([x, y, d]) => {
  if (d === "d") return `M${x} ${y} L${x - 10} ${y - 21} H${x + 10} Z`;
  if (d === "r") return `M${x} ${y} L${x - 21} ${y - 11} V${y + 11} Z`;
  return `M${x} ${y} L${x + 21} ${y - 11} V${y + 11} Z`;
};

const verticalLinks = colX.flatMap((x, i) => {
  const cx = x + colW[i] / 2;
  return [`M${cx} 998 V1048`, `M${cx} 1210 V1260`];
});

function Diagram() {
  return (
    <>
      <Connectors width="1631" height="1500" viewBox={`${SHEET_X} ${SHEET_Y} 1631 1500`} fill="none">
        {lines.concat(verticalLinks).map((d) => (
          <path key={d} d={d} stroke={LINE_BLUE} strokeWidth="2.6" />
        ))}
        {heavyLines.map((d) => (
          <path key={d} d={d} stroke={LINE_BLUE} strokeWidth="3.6" />
        ))}
        {arrowHeads.map((a) => (
          <path key={a.join("-")} d={arrowPath(a)} fill={LINE_BLUE} />
        ))}
      </Connectors>
      <FlowNode $x={1930} $y={550} $w={192} $h={145}>Main Page</FlowNode>
      {grid.map((row, r) =>
        row.map((label, c) =>
          label ? (
            <FlowNode key={`${r}-${c}`} $x={colX[c]} $y={rowY[r]} $w={colW[c]} $h={rowH[r]} $sub={r !== 1}>
              <div>
                {label.map((t, i) => (
                  <div key={i}>{t || "\u00a0"}</div>
                ))}
              </div>
            </FlowNode>
          ) : null
        )
      )}
    </>
  );
}

export default function App() {
  return (
    <Page>
      <GlobalStyle />
      <TopBlack />
      <TabStrip>
        <BrowserTab $w={488} $pl={29} $ls={0.4}>
          <M365Icon />
          <TabTitle>Visio | Microsoft 365</TabTitle>
          <TabClose $mr={32}>×</TabClose>
        </BrowserTab>
        <BrowserTab $w={463} $pl={14} $active>
          <VisioTabIcon />
          <TabTitle>Scenario One - Restaurant</TabTitle>
          <TabClose $mr={19}>×</TabClose>
        </BrowserTab>
        <NewTab>
          <svg width="24" height="24" viewBox="0 0 24 24" stroke="currentColor" strokeWidth="3"><path d="M12 2 V22 M2 12 H22" /></svg>
        </NewTab>
        <TabMenu><ChevronDown size={28} strokeWidth={2.6} /></TabMenu>
      </TabStrip>
      <ChromeBack>
        <ChromeBar>
          <NavIcon $color="#7f8294" $w={88}><ArrowLeft size={34} strokeWidth={2.4} /></NavIcon>
          <NavIcon $color="#7f8294" $w={56}><ArrowRight size={34} strokeWidth={2.4} /></NavIcon>
          <NavIcon $w={88}><RotateCw size={32} strokeWidth={2.6} /></NavIcon>
          <NavIcon $w={56}><HomeIcon /></NavIcon>
          <UrlBar>
            <TuneIcon />
            <UrlText>
              <b>georgiancollege-my.sharepoint.com</b>/personal/200587344_student_georgianc_on_ca/_layouts/15/doc.aspx?sourcedoc={"{"}a34c218b-ad6e-4d5a-bd89-b9b...
            </UrlText>
            <NavIcon $w={72}><Star size={34} strokeWidth={2.4} /></NavIcon>
          </UrlBar>
          <NavIcon $w={104}><ExtensionIcon /></NavIcon>
          <ChromeDivider />
          <NavIcon><MediaIcon /></NavIcon>
          <NavIcon><DownloadIcon /></NavIcon>
          <NavIcon><SidePanelIcon /></NavIcon>
          <NavIcon><Avatar>R</Avatar></NavIcon>
          <NavIcon><Kebab /></NavIcon>
        </ChromeBar>
      </ChromeBack>

      <AppHeader>
        <HeaderLeft>
          <Waffle>{Array.from({ length: 9 }).map((_, i) => <span key={i} />)}</Waffle>
          <AppName>Visio</AppName>
        </HeaderLeft>
        <DocTitle>
          {"Scenario One - Restaurant  -  Saved"}
          <ChevronDown size={30} strokeWidth={1.1} />
        </DocTitle>
        <HeaderRight>
          <Settings size={36} strokeWidth={1.4} />
          <UserBadge>RM</UserBadge>
        </HeaderRight>
      </AppHeader>

      <Ribbon>
        <RibbonTabs>
          <RibbonTab $mr={76}>File</RibbonTab>
          <RibbonTab $mr={60} $active>Home</RibbonTab>
          <RibbonTab $mr={64}>Insert</RibbonTab>
          <RibbonTab $mr={64}>Design</RibbonTab>
          <RibbonTab $mr={63}>Review</RibbonTab>
          <RibbonTab $mr={63}>View</RibbonTab>
          <RibbonTab $mr={0}>Help</RibbonTab>
          <ActionButton $w={213} $pl={16} $first>
            <svg width="30" height="36" viewBox="0 0 30 36" fill="none" stroke={BLUE} strokeWidth="2.4" style={{ marginRight: 2 }}><path d="M2 3 H27 V23 H11 L4 31 V23 H2 Z" /></svg>
            Comments
          </ActionButton>
          <ActionButton $w={197} $pl={15}>
            <svg width="34" height="38" viewBox="0 0 34 38" fill="none" stroke={BLUE} strokeWidth="2.2"><path d="M5 27 L24 3 C 27 1 32 4 30 8 L11 32 L3 36 Z M21 7 L27 12" /></svg>
            Editing
            <ChevronDown size={36} strokeWidth={1} />
          </ActionButton>
          <ActionButton $w={179} $pl={14} $primary>
            <svg width="32" height="38" viewBox="0 0 32 38" fill="none" stroke="#fff" strokeWidth="2.2"><path d="M12 12 H2 V36 H27 V26" /><path d="M10 25 C 10 16 15 12 22 12 V6 L31 14 L22 22 V17 C 16 17 13 20 10 25 Z" /></svg>
            Share
            <ChevronDown size={36} strokeWidth={1} />
          </ActionButton>
        </RibbonTabs>
        <ToolRow>
          <Tool $w={82}><UndoIcon /></Tool>
          <Tool $w={82}><RedoIcon /></Tool>
          <RibbonSep $ml={6} $mr={8} />
          {[CutIcon, CopyIcon, PasteIcon, PainterIcon].map((Icon, i) => (
            <Tool key={i} $w={80}><Icon /></Tool>
          ))}
          <RibbonSep $ml={8} $mr={8} />
          <Tool $w={80}><DeleteIcon /></Tool>
          <RibbonSep $ml={8} $mr={9} />
          <FontCombo>
            <ComboField $w={254} $divided>Calibri<ChevronDown size={36} strokeWidth={1} color="#777" /></ComboField>
            <ComboField $w={98}>12<ChevronDown size={36} strokeWidth={1} color="#777" style={{ marginRight: 6 }} /></ComboField>
          </FontCombo>
          <Tool $w={80} $ml={13}><GrowIcon /></Tool>
          <Tool $w={92}><ShrinkIcon /></Tool>
          <Tool $w={64}><BoldIcon /></Tool>
          <Tool $w={96}><ItalicIcon /></Tool>
          <Tool $w={62}><UnderlineIcon /></Tool>
          <DropTool $ml={23}>
            <Tool $w={54}><FontColorIcon /></Tool>
            <ChevBox><Chev /></ChevBox>
          </DropTool>
          <RibbonSep $ml={13} />
          <DropTool $ml={21}>
            <Tool $w={54}><AlignIcon /></Tool>
            <ChevBox><Chev /></ChevBox>
          </DropTool>
          <Tool $w={54} $ml={14}><RotateTextIcon /></Tool>
          <RibbonSep $ml={27} />
          <Tool $w={54} $ml={21}><TextBoxIcon /></Tool>
          <DropTool $ml={26}>
            <Tool $w={54}><RectIcon /></Tool>
            <ChevBox><ChevronDown size={36} strokeWidth={1.2} color="#333" /></ChevBox>
          </DropTool>
          <Tool $w={54} $ml={18}><ConnectorIcon /></Tool>
          <RibbonSep $ml={21} />
          <ToolGroup $ml={21} $gap={18}>
            <DropTool><Tool $w={54}><FillIcon /></Tool><ChevBox><Chev /></ChevBox></DropTool>
            <DropTool><Tool $w={54}><LineColorIcon /></Tool><ChevBox><Chev /></ChevBox></DropTool>
          </ToolGroup>
          <RibbonSep $ml={13} />
          <ToolGroup $ml={21} $gap={20}>
            {dropTools.map((Icon, i) => (
              <DropTool key={i}><Tool $w={54}><Icon /></Tool><ChevBox><Chev /></ChevBox></DropTool>
            ))}
          </ToolGroup>
          <RibbonSep $ml={16} />
          <Tool $w={54} $ml={20}><LayersIcon /></Tool>
        </ToolRow>
      </Ribbon>

      <Main>
        <ShapesPanel>
          <PanelHead>
            <PanelTitleRow>
              Shapes
              <ChevronLeft size={36} strokeWidth={1.5} />
            </PanelTitleRow>
            <SearchBox>
              Search for shapes
              <SearchDivider />
              <SearchIconBox>
                <Search size={32} strokeWidth={2.2} style={{ transform: "scaleX(-1)" }} />
              </SearchIconBox>
            </SearchBox>
          </PanelHead>
          <PanelBody>
            <StencilRail>
              <RailTile>
                <svg width="52" height="52" viewBox="0 0 52 52" fill="#fff" stroke={BLUE} strokeWidth="2">
                  <path d="M18 10 V40 M26 25 H34" fill="none" />
                  <rect x="6" y="1" width="23" height="9" rx="4" />
                  <path d="M17 15 L27 25 L17 35 L7 25 Z" />
                  <rect x="30" y="20" width="21" height="10" rx="2" />
                  <rect x="6" y="39" width="23" height="10" rx="2" />
                </svg>
              </RailTile>
              <RailAdd>
                <svg width="22" height="22" viewBox="0 0 22 22" stroke="#fff" strokeWidth="3.4"><path d="M11 1 V21 M1 11 H21" /></svg>
              </RailAdd>
            </StencilRail>
            <Stencil>
              <StencilTitle>Basic Flowchart Shapes</StencilTitle>
              <ShapeGrid>
                {shapes.map(([name, art]) => (
                  <ShapeCell key={name}>
                    {shapeBox(art)}
                    <ShapeLabel>{name}</ShapeLabel>
                  </ShapeCell>
                ))}
              </ShapeGrid>
            </Stencil>
          </PanelBody>
        </ShapesPanel>
        <Workspace>
          <Canvas>
            <Sheet>
              <Diagram />
            </Sheet>
            <ScrollThumb />
          </Canvas>
          <PageBar>
            <svg width="32" height="24" viewBox="0 0 32 24" stroke="#c8c8c8" strokeWidth="2.4"><path d="M0 2 H32 M0 12 H32 M0 22 H32" /></svg>
            <NavIcon $w={70}><PagerChevron /></NavIcon>
            <NavIcon $w={50}><PagerChevron flip /></NavIcon>
            <PageSep />
            <PageName>Page-1</PageName>
            <PageSep />
            <svg width="30" height="30" viewBox="0 0 30 30" fill="none" stroke={BLUE} strokeWidth="2" style={{ marginLeft: 10 }}>
              <circle cx="15" cy="15" r="14" />
              <path d="M15 7 V23 M7 15 H23" strokeWidth="2.4" />
            </svg>
          </PageBar>
        </Workspace>
      </Main>

      <StatusBar>
        <svg width="24" height="4" viewBox="0 0 24 4" fill="#444"><rect width="24" height="3" /></svg>
        <ZoomTrack><ZoomThumb /></ZoomTrack>
        <svg width="24" height="24" viewBox="0 0 24 24" stroke="#444" strokeWidth="2"><path d="M12 0 V24 M0 12 H24" /></svg>
        <StatusText $ml={46}>100%</StatusText>
        <svg width="26" height="40" viewBox="0 0 26 40" fill="none" stroke="#605e5c" strokeWidth="1.6" style={{ marginLeft: 47 }}>
          <rect x="8" y="14" width="10" height="12" strokeWidth="2" />
          <path d="M9 7 L13 3 L17 7 M9 33 L13 37 L17 33 M4 16 L1 20 L4 24 M22 16 L25 20 L22 24" />
        </svg>
        <StatusText $ml={46}>Give Feedback to Microsoft</StatusText>
      </StatusBar>
    </Page>
  );
}
